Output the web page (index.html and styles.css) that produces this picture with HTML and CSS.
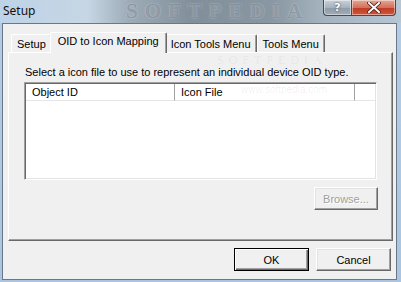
FILE: index.html
```html
<!DOCTYPE html>
<html lang="en">
<head>
  <meta charset="UTF-8" />
  <title>Setup</title>
  <link rel="stylesheet" href="styles.css">
</head>
<body>

<div class="window">
  <div class="titlebar">
    <span class="title">Setup</span>
    <span class="watermark">SOFTPEDIA</span>
    <div class="caption-buttons">
      <div class="cap help">?</div>
      <div class="cap close">
        <svg width="14" height="11" viewBox="0 0 14 11">
          <path d="M2 1 L12 10 M12 1 L2 10" stroke="#4a1a14" stroke-width="3.6" stroke-linecap="square" />
          <path d="M2 1 L12 10 M12 1 L2 10" stroke="#fff" stroke-width="2" stroke-linecap="square" />
        </svg>
      </div>
    </div>
  </div>

  <div class="client">
    <div class="tabs">
      <div class="tab">Setup</div>
      <div class="tab active">OID to Icon Mapping</div>
      <div class="tab">Icon Tools Menu</div>
      <div class="tab">Tools Menu</div>
    </div>

    <div class="panel">
      <span class="panel-mark">SOFTPEDIA</span>
      <span class="panel-url">www.softpedia.com</span>
      <p class="hint">Select a icon file to use to represent an individual device OID type.</p>
      <div class="list">
        <div class="list-header">
          <div class="col col-id">Object ID</div>
          <div class="col col-file">Icon File</div>
          <div class="col col-rest"></div>
        </div>
      </div>
      <div class="panel-actions">
        <button class="btn browse" disabled>Browse...</button>
      </div>
    </div>

    <div class="dialog-actions">
      <button class="btn default">OK</button>
      <button class="btn">Cancel</button>
    </div>
  </div>
</div>

</body>
</html>
```

FILE: styles.css
```css
* {
  margin: 0; padding: 0; box-sizing: border-box;
}
body {
  width: 401px;
  height: 282px;
  overflow: hidden;
  font-family: 'Liberation Sans', Arial, sans-serif;
  font-size: 11px;
  color: #000;
}
.window {
  width: 401px;
  height: 282px;
  display: flex;
  flex-direction: column;
  background: linear-gradient(to bottom, #b4cde6, #a9c5e2);
}

/* title bar */
.titlebar {
  height: 23px;
  display: flex;
  justify-content: space-between;
  align-items: flex-start;
  position: relative;
  overflow: hidden;
  background: linear-gradient(to right, #bed3e8 0, #c6d6e4 22%, #9eacb8 32%, #818f9a 48%, #8997a2 68%, #a4b2be 80%, #b7c6d3 100%);
}
.title {
  font-family: 'Noto Sans', 'Open Sans', sans-serif;
  font-size: 12px;
  line-height: 16px;
  padding: 3px 0 0 3px;
  color: #111;
  position: relative;
  z-index: 1;
}
.watermark {
  position: absolute;
  left: 126px;
  top: 1px;
  font-family: 'Liberation Serif', serif;
  font-weight: bold;
  font-size: 21px;
  line-height: 21px;
  letter-spacing: 7px;
  color: rgba(92, 104, 116, 0.45);
  text-shadow: 0 0 2px rgba(225, 232, 240, 0.6);
}
.caption-buttons {
  display: flex;
  margin-right: 5px;
  position: relative;
  z-index: 1;
}
.cap {
  height: 16px;
  display: flex;
  align-items: center;
  justify-content: center;
  border: 1px solid #3e4c5a;
  border-top: none;
  box-shadow: inset 0 0 0 1px rgba(255, 255, 255, 0.45);
}
.help {
  width: 28px;
  border-right: none;
  border-radius: 0 0 0 4px;
  background: linear-gradient(to bottom, #c9d2da, #a6b2bd 50%, #8f9ca8 51%, #9eacb8);
  color: #fff;
  font-family: 'DejaVu Sans', sans-serif;
  font-weight: bold;
  font-size: 11px;
  text-shadow: 0 0 2px #333;
}
.close {
  width: 45px;
  border-radius: 0 0 4px 0;
  background: linear-gradient(to bottom, #e6a796, #d0725c 50%, #bf3a22 51%, #d0563c);
}

/* client area */
.client {
  flex: 1;
  margin: 0 4px 2px 2px;
  border: 1px solid #6a7886;
  background: #f0f0f0;
  padding: 8px 3px 0 5px;
}
.tabs {
  display: flex;
  align-items: flex-end;
  height: 20px;
  padding-left: 3px;
  position: relative;
  z-index: 1;
}
.tab {
  height: 18px;
  padding: 2px 5px 0;
  line-height: 15px;
  white-space: nowrap;
  background: #f0f0f0;
  border: 1px solid;
  border-color: #fff #696969 transparent #fff;
  border-bottom: none;
  border-radius: 2px 2px 0 0;
  box-shadow: inset -1px 0 #a0a0a0;
}
.tab.active {
  height: 21px;
  margin: 0 -2px -1px;
  padding-top: 1px;
  padding-left: 7px;
  padding-right: 7px;
  position: relative;
  z-index: 2;
}
.panel {
  height: 189px;
  position: relative;
  background: #f0f0f0;
  border: 1px solid;
  border-color: #fff #696969 #696969 #fff;
  box-shadow: inset -1px -1px #a0a0a0;
  padding: 13px 15px 0 15px;
}
.panel-mark {
  position: absolute;
  left: 208px;
  top: 2px;
  font-family: 'Liberation Serif', serif;
  font-size: 12px;
  line-height: 11px;
  letter-spacing: 5px;
  color: rgba(0, 0, 0, 0.06);
}
.panel-url {
  position: absolute;
  left: 232px;
  top: 31px;
  font-size: 10px;
  color: rgba(0, 0, 0, 0.08);
}
.hint {
  line-height: 13px;
  margin-left: 1px;
  position: relative;
}
.list {
  margin-top: 3px;
  height: 98px;
  background: #fff;
  border: 1px solid;
  border-color: #a0a0a0 #fff #fff #a0a0a0;
  box-shadow: inset 1px 1px #696969, inset -1px -1px #e3e3e3;
  padding: 1px 1px 0 1px;
}
.list-header {
  display: flex;
  height: 17px;
}
.col {
  line-height: 16px;
  padding-left: 6px;
  background: #fff;
  border-right: 1px solid #a0a0a0;
  border-bottom: 1px solid #e5e5e5;
}
.col-id {
  width: 149px;
}
.col-file {
  width: 180px;
}
.col-rest {
  flex: 1;
  border-right: none;
}
.panel-actions {
  display: flex;
  justify-content: flex-end;
  margin-top: 7px;
}
.btn {
  width: 75px;
  height: 23px;
  font-family: 'Liberation Sans', Arial, sans-serif;
  font-size: 11px;
  color: #000;
  background: #f0f0f0;
  border: 1px solid;
  border-color: #fff #696969 #696969 #fff;
  box-shadow: inset -1px -1px #a0a0a0, inset 1px 1px #e3e3e3;
}
.btn.default {
  border-color: #000;
  box-shadow: inset 1px 1px #fff, inset -1px -1px #696969, inset -2px -2px #a0a0a0;
}
.btn.browse {
  width: 64px;
  margin-right: -1px;
}
.btn:disabled {
  color: #a0a0a0;
  text-shadow: 1px 1px #fff;
}
.dialog-actions {
  display: flex;
  justify-content: flex-end;
  gap: 7px;
  padding: 7px 2px 0 0;
}
```
